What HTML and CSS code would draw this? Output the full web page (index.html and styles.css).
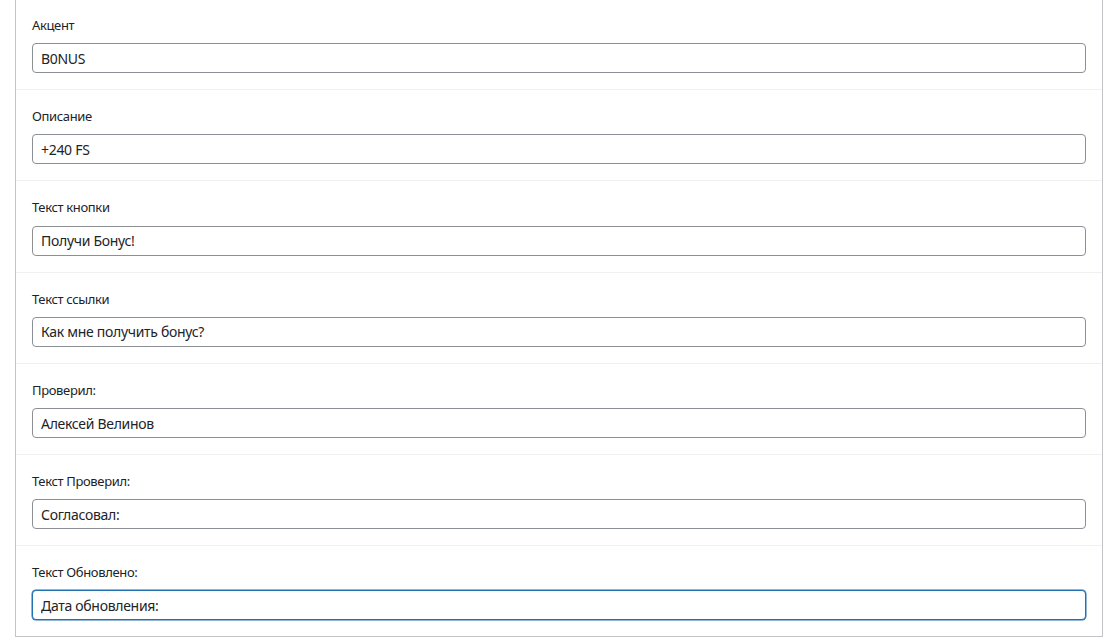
FILE: index.html
```html
<!DOCTYPE html>
<html lang="ru">
<head>
<meta charset="utf-8">
<title>Настройки</title>
<link rel="stylesheet" href="styles.css">
</head>
<body>
<div class="page">
  <div class="panel">
    <div class="field">
      <label class="field-label" for="f1">Акцент</label>
      <input class="field-input" id="f1" type="text" value="B0NUS">
    </div>
    <div class="field">
      <label class="field-label" for="f2">Описание</label>
      <input class="field-input" id="f2" type="text" value="+240 FS">
    </div>
    <div class="field">
      <label class="field-label" for="f3">Текст кнопки</label>
      <input class="field-input" id="f3" type="text" value="Получи Бонус!">
    </div>
    <div class="field">
      <label class="field-label" for="f4">Текст ссылки</label>
      <input class="field-input" id="f4" type="text" value="Как мне получить бонус?">
    </div>
    <div class="field">
      <label class="field-label" for="f5">Проверил:</label>
      <input class="field-input" id="f5" type="text" value="Алексей Велинов">
    </div>
    <div class="field">
      <label class="field-label" for="f6">Текст Проверил:</label>
      <input class="field-input" id="f6" type="text" value="Согласовал:">
    </div>
    <div class="field">
      <label class="field-label" for="f7">Текст Обновлено:</label>
      <input class="field-input is-focused" id="f7" type="text" value="Дата обновления:">
    </div>
  </div>
</div>
<script src="script.js"></script>
</body>
</html>
```

FILE: styles.css
```css
* {
  box-sizing: border-box;
}

html, body {
  margin: 0;
  padding: 0;
  background: #ffffff;
}

body {
  font-family: "Noto Sans", "Open Sans", sans-serif;
  color: #1d2327;
  overflow: hidden;
}

.page {
  padding: 0 8px 0 15px;
  margin-top: -1px;
}

.panel {
  width: 1088px;
  background: #ffffff;
  border: 1px solid #c3c4c7;
  border-top: none;
}

.field {
  padding: 16px;
  border-bottom: 1px solid #f0f0f1;
  display: flex;
  flex-direction: column;
  gap: 8px;
}

.field:last-child {
  border-bottom: none;
}

.field-label {
  font-size: 13px;
  line-height: 20.2px;
  letter-spacing: -0.35px;
  color: #1d2327;
}

.field-input {
  width: 100%;
  height: 30px;
  border: 1px solid #8c8f94;
  border-radius: 4px;
  padding: 0 8px;
  font-family: inherit;
  font-size: 14px;
  letter-spacing: -0.3px;
  color: #1d2327;
  caret-color: #1d2327;
  background: #ffffff;
  outline: none;
}

.field-input.is-focused {
  border-color: #2271b1;
  box-shadow: 0 0 0 0.5px #2271b1;
}
```

FILE: script.js
```js
var el = document.getElementById('f7');
el.focus();
el.setSelectionRange(el.value.length, el.value.length);
```
